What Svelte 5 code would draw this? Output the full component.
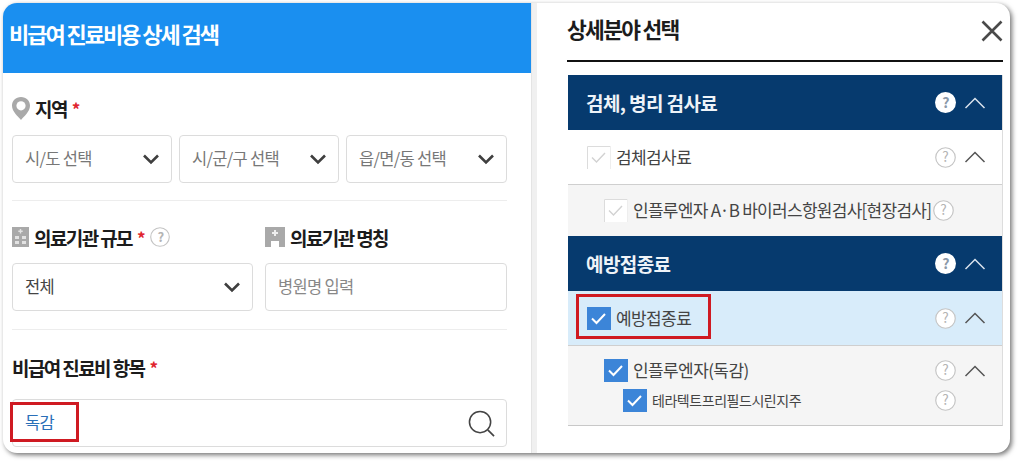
<script lang="ts">
  const checkPath = "M5 11.5 L9.5 16 L18 7";
</script>

{#snippet chevronDown()}
  <svg class="chev-down" viewBox="0 0 18 12" width="18" height="12"><path d="M2 2.5 L9 9.5 L16 2.5" fill="none" stroke="#3f3f3f" stroke-width="2.6"/></svg>
{/snippet}

{#snippet chevronUp(color)}
  <svg class="chev-up" viewBox="0 0 22 12" width="22" height="12"><path d="M1.5 11 L11 1.5 L20.5 11" fill="none" stroke={color} stroke-width="1.5"/></svg>
{/snippet}

{#snippet help(size = 21)}
  <svg class="help" viewBox="0 0 20 20" width={size} height={size}>
    <circle cx="10" cy="10" r="9.3" fill="#fff" stroke="#c4c4c4" stroke-width="1.1"/>
    <text x="10" y="14.6" text-anchor="middle" font-size="13" fill="#b4b4b4">?</text>
  </svg>
{/snippet}

{#snippet helpSolid()}
  <svg class="help" viewBox="0 0 20 20" width="21" height="21">
    <circle cx="10" cy="10" r="10" fill="#fff"/>
    <text x="10" y="14.8" text-anchor="middle" font-size="13.5" font-weight="700" fill="#8b99a9">?</text>
  </svg>
{/snippet}

{#snippet check(on, size = 24)}
  <svg class="check" viewBox="0 0 24 23" width={size} height={size * 23 / 24}>
    {#if on}
      <rect width="24" height="23" fill="#3c85d8"/>
      <path d={checkPath} fill="none" stroke="#fff" stroke-width="2"/>
    {:else}
      <rect width="24" height="23" fill="#fff"/>
      <path d="M0.5 23 V0.5 H23.5" fill="none" stroke="#dcdcdc"/>
      <path d="M23.5 0.5 V23" fill="none" stroke="#eeeeee"/>
      <path d={checkPath} fill="none" stroke="#d2d2d2" stroke-width="1.4"/>
    {/if}
  </svg>
{/snippet}

{#snippet req()}<span class="req">*</span>{/snippet}

<div class="page">
  <main class="card">
    <section class="left">
      <header class="blue-head"><h1>비급여 진료비용 상세 검색</h1></header>

      <div class="form">
        <div class="group">
          <div class="label">
            <svg viewBox="0 0 18 23" width="18" height="23">
              <path d="M9 0 C3.8 0 0 3.8 0 8.8 C0 14.5 6 19.5 9 23 C12 19.5 18 14.5 18 8.8 C18 3.8 14.2 0 9 0 Z" fill="#a9a9a9"/>
              <circle cx="9" cy="8.8" r="4.6" fill="#fff"/>
            </svg>
            <span>지역</span>{@render req()}
          </div>
          <div class="row-3">
            <div class="field"><span class="muted">시/도 선택</span>{@render chevronDown()}</div>
            <div class="field"><span class="muted">시/군/구 선택</span>{@render chevronDown()}</div>
            <div class="field"><span class="muted">읍/면/동 선택</span>{@render chevronDown()}</div>
          </div>
        </div>

        <div class="group second">
          <div class="row-2 labels">
            <div class="label">
              <svg viewBox="0 0 17 20" width="17" height="20">
                <rect width="17" height="20" fill="#a9a9a9"/>
                <path d="M8.5 2 V6.5 M6.3 4.2 H10.7" stroke="#e2e2e2" stroke-width="1.4"/>
                <rect x="3" y="9" width="4" height="3" fill="#e2e2e2"/><rect x="10" y="9" width="4" height="3" fill="#e2e2e2"/>
                <rect x="3" y="14" width="4" height="3" fill="#e2e2e2"/><rect x="10" y="14" width="4" height="3" fill="#e2e2e2"/>
              </svg>
              <span>의료기관 규모</span>{@render req()}
              <span class="label-help">{@render help(20)}</span>
            </div>
            <div class="label">
              <svg viewBox="0 0 20 20" width="20" height="20">
                <path d="M0 0 H20 V20 H14 V14 H6 V20 H0 Z" fill="#a9a9a9"/>
                <path d="M10 3 V9 M7 6 H13" stroke="#eee" stroke-width="2"/>
              </svg>
              <span>의료기관 명칭</span>
            </div>
          </div>
          <div class="row-2">
            <div class="field"><span class="dark">전체</span>{@render chevronDown()}</div>
            <div class="field"><span class="placeholder">병원명 입력</span></div>
          </div>
        </div>

        <div class="group third">
          <div class="label"><span>비급여 진료비 항목</span>{@render req()}</div>
          <div class="field search">
            <span class="value">독감</span>
            <svg viewBox="0 0 28 28" width="27" height="27">
              <circle cx="12.5" cy="12.5" r="11" fill="none" stroke="#444" stroke-width="1.6"/>
              <path d="M20.5 20.5 L27 27" stroke="#444" stroke-width="1.8"/>
            </svg>
            <i class="mark mark-left"></i>
          </div>
        </div>
      </div>
    </section>

    <div class="gutter"></div>

    <section class="right">
      <div class="title-row">
        <h2>상세분야 선택</h2>
        <svg viewBox="0 0 22 22" width="22" height="22"><path d="M1.5 1.5 L20.5 20.5 M20.5 1.5 L1.5 20.5" stroke="#4a4a4a" stroke-width="2.6" fill="none"/></svg>
      </div>

      <div class="tree">
        <div class="cat">
          <span>검체, 병리 검사료</span>
          <div class="tools">{@render helpSolid()}{@render chevronUp("#d9e2ec")}</div>
        </div>
        <div class="item lvl1">
          <div class="name">{@render check(false)}<span>검체검사료</span></div>
          <div class="tools">{@render help()}{@render chevronUp("#555")}</div>
        </div>
        <div class="item lvl2 grey tight">
          <div class="name">{@render check(false)}<span>인플루엔자 A·B 바이러스항원검사[현장검사]</span></div>
          <div class="tools solo">{@render help()}</div>
        </div>
        <div class="cat">
          <span>예방접종료</span>
          <div class="tools">{@render helpSolid()}{@render chevronUp("#d9e2ec")}</div>
        </div>
        <div class="item lvl1 selected">
          <div class="name">{@render check(true)}<span>예방접종료</span></div>
          <div class="tools">{@render help()}{@render chevronUp("#555")}</div>
          <i class="mark mark-right"></i>
        </div>
        <div class="nested grey">
          <div class="sub lvl2">
            <div class="name">{@render check(true)}<span>인플루엔자(독감)</span></div>
            <div class="tools">{@render help()}{@render chevronUp("#555")}</div>
          </div>
          <div class="sub lvl3">
            <div class="name small">{@render check(true)}<span>테라텍트프리필드시린지주</span></div>
            <div class="tools solo">{@render help()}</div>
          </div>
        </div>
      </div>
    </section>
  </main>
</div>

<style>
  :global(body) {
    margin: 0;
    background: #fff;
  }

  .page {
    width: 1024px;
    height: 466px;
    padding: 3px 0 0 3px;
    box-sizing: border-box;
    font-family: "Noto Sans CJK KR", "Noto Sans", sans-serif;
    color: #222;
    overflow: hidden;
  }

  .card {
    display: flex;
    width: 1007px;
    height: 450px;
    background: #fff;
    border-radius: 14px;
    overflow: hidden;
    box-shadow: 2px 2px 5px rgba(0, 0, 0, 0.55);
  }

  .left {
    width: 528px;
    flex: none;
  }

  .blue-head {
    height: 70px;
    background: #1a8ff0;
    padding: 16px 0 0 6px;
    box-sizing: border-box;
  }

  h1 {
    margin: 0;
    font-size: 22px;
    line-height: 28px;
    font-weight: 700;
    color: #fff;
    letter-spacing: -2.05px;
  }

  .form {
    padding: 23px 24px 0 9px;
  }

  .group + .group {
    border-top: 1px solid #ededed;
  }

  .group {
    padding-bottom: 17px;
  }

  .second {
    padding-top: 24px;
    padding-bottom: 18px;
  }

  .third {
    padding-top: 25px;
    padding-bottom: 0;
  }

  .label {
    display: flex;
    align-items: center;
    height: 24px;
    font-size: 19px;
    font-weight: 700;
    color: #1c1c1c;
    letter-spacing: -1.6px;
    gap: 5px;
  }

  .label svg {
    flex: none;
  }

  .req {
    color: #e0242e;
    font-size: 17px;
    letter-spacing: 0;
  }

  .label-help {
    display: flex;
    margin-left: -1px;
  }

  .row-3 {
    display: grid;
    grid-template-columns: 160px 160px 161px;
    gap: 7px;
    margin-top: 15px;
  }

  .row-2 {
    display: grid;
    grid-template-columns: 241px 242px;
    gap: 12px;
  }

  .row-2.labels {
    margin-bottom: 14px;
  }

  .field {
    display: flex;
    align-items: center;
    justify-content: space-between;
    height: 48px;
    box-sizing: border-box;
    padding: 0 11px 0 12px;
    border: 1px solid #dcdcdc;
    border-radius: 4px;
    background: #fff;
    font-size: 16.5px;
    letter-spacing: -0.7px;
    position: relative;
  }

  .field > span {
    margin-bottom: 3px;
  }

  .muted {
    color: #777;
  }

  .dark {
    color: #444;
  }

  .placeholder {
    color: #888;
  }

  .search {
    margin-top: 20px;
    height: 48px;
    width: 495px;
  }

  .value {
    color: #2a6fb8;
  }

  .mark {
    position: absolute;
    border: 3px solid #cf1a22;
    box-sizing: border-box;
    pointer-events: none;
  }

  .mark-left {
    left: -3px;
    top: 2px;
    width: 69px;
    height: 40px;
  }

  .gutter {
    width: 6px;
    flex: none;
    background: #f0f0f0;
    border-left: 1px solid #e4e4e4;
    box-sizing: border-box;
  }

  .right {
    flex: 1;
    padding: 0 6px 0 30px;
  }

  .title-row {
    display: flex;
    align-items: center;
    justify-content: space-between;
    height: 54px;
    border-bottom: 2px solid #111;
    margin-bottom: 13px;
    padding: 3px 0 0;
    box-sizing: content-box;
    width: 436px;
  }

  .title-row svg {
    margin-bottom: 5px;
  }

  h2 {
    margin: 0 0 10px;
    font-size: 21.5px;
    font-weight: 700;
    letter-spacing: -1.7px;
    color: #1c1c1c;
  }

  .tree {
    margin-left: 1px;
    width: 435px;
    border-bottom: 1px solid #c8c8c8;
    border-right: 1px solid #ddd;
    box-sizing: border-box;
  }

  .cat {
    display: flex;
    align-items: center;
    justify-content: space-between;
    height: 55px;
    box-sizing: border-box;
    padding: 0 16px 0 18px;
    background: #063a6e;
    color: #eef3f8;
    font-size: 19px;
    font-weight: 700;
    letter-spacing: -0.6px;
  }

  .tools {
    display: flex;
    align-items: center;
    gap: 8px;
  }

  .tools.solo {
    padding-right: 30px;
  }

  .help,
  .check,
  .chev-up,
  .chev-down {
    display: block;
    flex: none;
  }

  .item {
    position: relative;
    display: flex;
    align-items: center;
    justify-content: space-between;
    height: 55px;
    box-sizing: border-box;
    padding-right: 16px;
    border-bottom: 1px solid #cfcfcf;
    background: #fff;
  }

  .item.tight {
    height: 51px;
    border-bottom: 0;
    padding-right: 48px;
  }

  .item.tight .tools.solo {
    padding-right: 0;
  }

  .item.tight .name {
    letter-spacing: -0.72px;
  }

  .grey {
    background: #f5f5f5;
  }

  .item.grey {
    background: #f5f5f5;
  }

  .selected {
    background: #d8ecfa;
  }

  .name {
    display: flex;
    align-items: center;
    gap: 5px;
    font-size: 17px;
    letter-spacing: -0.6px;
    color: #444;
    white-space: nowrap;
  }

  .name span {
    margin-bottom: 2px;
  }

  .name.small {
    font-size: 14px;
    letter-spacing: -0.45px;
    gap: 5px;
  }

  .lvl1 .name {
    padding-left: 19px;
  }

  .lvl2 .name {
    padding-left: 36px;
  }

  .lvl3 .name {
    padding-left: 55px;
  }

  .nested {
    padding: 13px 0;
  }

  .sub {
    display: flex;
    align-items: center;
    justify-content: space-between;
    height: 23px;
    padding-right: 16px;
    margin-bottom: 7px;
  }

  .sub:last-child {
    margin-bottom: 0;
  }

  .mark-right {
    left: 8px;
    top: 3px;
    width: 135px;
    height: 45px;
  }
</style>
